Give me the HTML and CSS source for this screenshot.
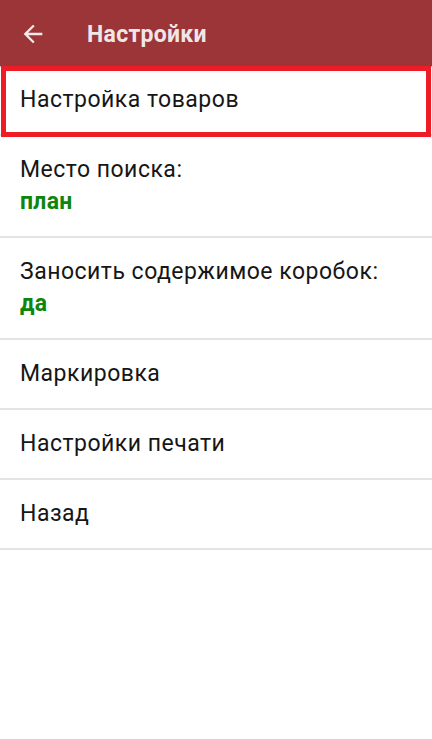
FILE: index.html
```html
<!DOCTYPE html>
<html lang="ru">
<head>
<meta charset="utf-8">
<title>Настройки</title>
<link rel="stylesheet" href="styles.css">
</head>
<body>
<div class="screen">
  <header class="appbar">
    <svg class="back" viewBox="0 0 24 24" width="28" height="28"><path d="M20 11H7.83l5.59-5.59L12 4l-8 8 8 8 1.41-1.41L7.83 13H20v-2z" fill="#f2eaea"/></svg>
    <h1 class="title">Настройки</h1>
  </header>
  <ul class="list">
    <li class="row highlighted"><span class="label">Настройка товаров</span></li>
    <li class="row"><span class="label">Место поиска:</span><span class="value">план</span></li>
    <li class="row"><span class="label">Заносить содержимое коробок:</span><span class="value">да</span></li>
    <li class="row"><span class="label">Маркировка</span></li>
    <li class="row"><span class="label">Настройки печати</span></li>
    <li class="row"><span class="label">Назад</span></li>
  </ul>
</div>
</body>
</html>
```
FILE: styles.css
```css
html, body {
  margin: 0;
  padding: 0;
  background: #ffffff;
}
body {
  font-family: Roboto, "Noto Sans", "Liberation Sans", sans-serif;
}
.screen {
  width: 432px;
  min-height: 739px;
  background: #ffffff;
}
.appbar {
  height: 66px;
  background: #9b3537;
  display: flex;
  align-items: center;
  padding-left: 19px;
  box-sizing: border-box;
  box-shadow: 0 1px 1px rgba(0,0,0,0.25);
  position: relative;
  z-index: 2;
}
.back {
  display: block;
  margin-top: 2px;
}
.title {
  margin: 2px 0 0 40px;
  font-size: 23px;
  font-weight: 700;
  color: #efe7e7;
  letter-spacing: 0.3px;
}
.list {
  list-style: none;
  margin: 0;
  padding: 0;
}
.row {
  position: relative;
  display: flex;
  flex-direction: column;
  padding: 18px 20px;
  border-bottom: 2px solid #e4e4e4;
}
.label {
  font-size: 23px;
  line-height: 32px;
  letter-spacing: 0.5px;
  color: #161616;
}
.value {
  font-size: 23px;
  line-height: 32px;
  letter-spacing: 0.3px;
  font-weight: 700;
  color: #0d860d;
}
.highlighted::after {
  content: "";
  position: absolute;
  left: 1px;
  right: 1px;
  top: 0;
  bottom: -3px;
  border: 5px solid #ee1c25;
  z-index: 3;
}
```
